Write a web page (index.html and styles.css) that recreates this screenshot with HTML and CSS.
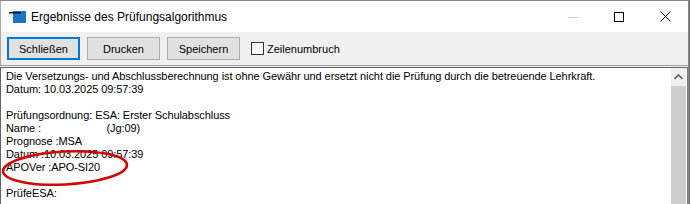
FILE: index.html
```html
<!DOCTYPE html>
<html>
<head>
    <meta charset="UTF-8">
    <title>Ergebnisse des Prüfungsalgorithmus</title>
    <link rel="stylesheet" href="styles.css">
</head>
<body>
    <div class="window">
        <div class="titlebar">
            <svg class="appicon" width="17" height="14" viewBox="0 0 17 14">
                <rect x="4" y="1" width="13" height="12" fill="#1a74c8"/>
                <rect x="0" y="2" width="12" height="1.5" fill="#111"/>
            </svg>
            <span class="title">Ergebnisse des Prüfungsalgorithmus</span>
            <div class="caption">
                <div class="cbtn">
                    <svg width="10" height="10" viewBox="0 0 10 10"><line x1="0" y1="5.5" x2="10" y2="5.5" stroke="#c8c8c8" stroke-width="1"/></svg>
                </div>
                <div class="cbtn">
                    <svg width="10" height="10" viewBox="0 0 10 10"><rect x="0.5" y="0.5" width="9" height="9" fill="none" stroke="#000" stroke-width="1"/></svg>
                </div>
                <div class="cbtn">
                    <svg width="11" height="11" viewBox="0 0 11 11"><path d="M0.5 0.5 L10.5 10.5 M10.5 0.5 L0.5 10.5" stroke="#000" stroke-width="1"/></svg>
                </div>
            </div>
        </div>
        <div class="toolbar">
            <button class="btn focus">Schließen</button>
            <button class="btn">Drucken</button>
            <button class="btn">Speichern</button>
            <label class="chk"><span class="box"></span>Zeilenumbruch</label>
        </div>
        <div class="output">
<pre class="log">Die Versetzungs- und Abschlussberechnung ist ohne Gewähr und ersetzt nicht die Prüfung durch die betreuende Lehrkraft.
Datum: 10.03.2025 09:57:39

Prüfungsordnung: ESA: Erster Schulabschluss
Name :                      (Jg:09)
Prognose :MSA
Datum :10.03.2025 09:57:39
APOVer :APO-SI20

PrüfeESA:</pre>
            <div class="vscroll">
                <div class="arrow">
                    <svg width="9" height="6" viewBox="0 0 9 6"><path d="M0.5 5 L4.5 1 L8.5 5" fill="none" stroke="#606060" stroke-width="1.6"/></svg>
                </div>
                <div class="thumb"></div>
            </div>
            <svg class="mark" width="136" height="42" viewBox="0 0 136 42">
                <ellipse cx="66" cy="20" rx="62" ry="16.5" fill="none" stroke="#d60000" stroke-width="2.6" transform="rotate(-3 66 20)"/>
            </svg>
        </div>
    </div>
</body>
</html>
```

FILE: styles.css
```css
body {
    margin: 0;
    background: #6a6a6a;
    width: 690px;
    height: 204px;
    overflow: hidden;
}

.window {
    width: 688px;
    height: 203px;
    background: #f0f0f0;
    border-top: 1px solid #8a8a8a;
    border-right: 1px solid #8a8a8a;
    display: flex;
    flex-direction: column;
    overflow: hidden;
}

.titlebar {
    height: 31px;
    background: #fff;
    border-left: 1px solid #a8a8a8;
    display: flex;
    align-items: center;
    flex-shrink: 0;
}

.appicon {
    margin-left: 8px;
    margin-top: 1px;
}

.title {
    margin-left: 5px;
    font-family: "Liberation Sans", sans-serif;
    font-size: 12px;
    color: #000;
}

.caption {
    margin-left: auto;
    display: flex;
    height: 100%;
}

.cbtn {
    width: 46px;
    display: flex;
    align-items: center;
    justify-content: center;
}

.toolbar {
    height: 28px;
    padding: 5px 0 0 6px;
    border-left: 1px solid #a8a8a8;
    border-bottom: 1px solid #a0a0a0;
    display: flex;
    align-items: flex-start;
    gap: 7px;
    flex-shrink: 0;
}

.btn {
    width: 73px;
    height: 23px;
    margin: 0;
    padding: 0;
    background: #e1e1e1;
    border: 1px solid #adadad;
    font-family: "Liberation Sans", sans-serif;
    font-size: 11px;
    color: #000;
}

.btn.focus {
    border-color: #0078d7;
    box-shadow: inset 0 0 0 1px #0078d7;
}

.chk {
    margin-left: 4px;
    height: 23px;
    display: flex;
    align-items: center;
    font-family: "Liberation Sans", sans-serif;
    font-size: 11px;
    color: #000;
}

.box {
    width: 11px;
    height: 11px;
    background: #fff;
    border: 1px solid #333;
    margin-right: 3px;
}

.output {
    position: relative;
    flex: 1;
    margin-top: 1px;
    background: #fff;
    border-top: 1px solid #646464;
    border-left: 1px solid #646464;
    border-right: 1px solid #7a7a7a;
    display: flex;
}

.log {
    flex: 1;
    margin: 0;
    padding: 2px 0 0 5px;
    font-family: "Liberation Sans", sans-serif;
    font-size: 11px;
    letter-spacing: -0.08px;
    line-height: 13px;
    color: #000;
}

.vscroll {
    width: 15px;
    margin-right: 1px;
    background: #f0f0f0;
    display: flex;
    flex-direction: column;
}

.arrow {
    height: 18px;
    display: flex;
    align-items: center;
    justify-content: center;
}

.thumb {
    flex: 1;
    background: #cdcdcd;
}

.mark {
    position: absolute;
    left: -2px;
    top: 80px;
}
```
